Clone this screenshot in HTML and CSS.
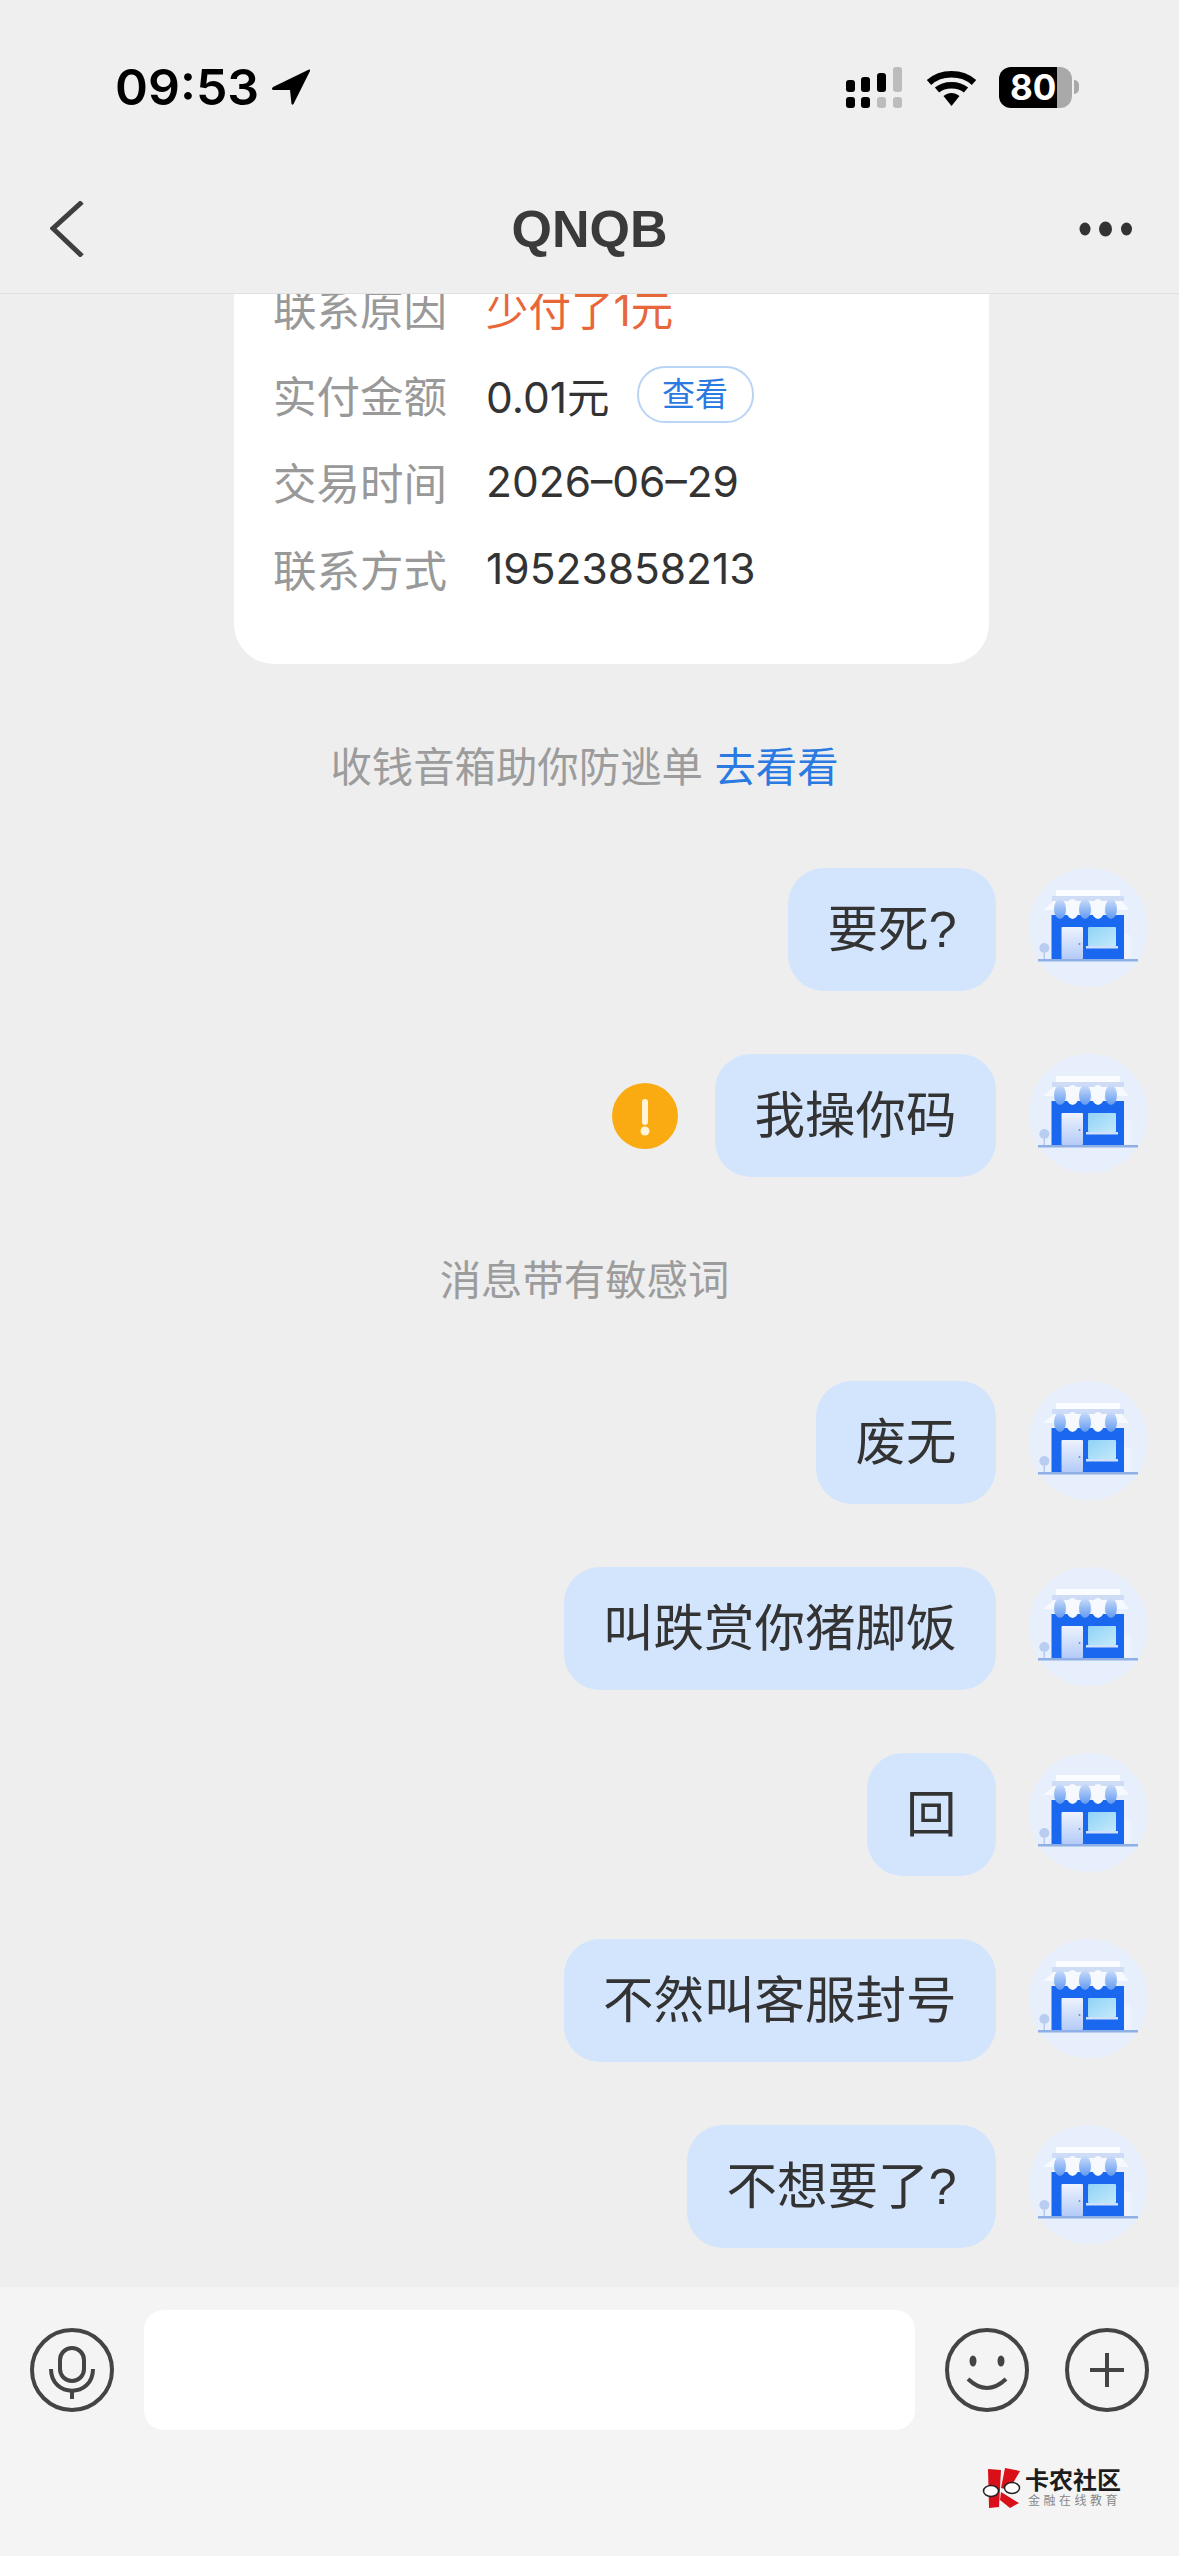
FILE: index.html
```html
<!DOCTYPE html>
<html lang="zh-CN">
<head>
<meta charset="utf-8">
<title>QNQB</title>
<link rel="stylesheet" href="styles.css">
</head>
<body>
<svg class="defs" width="0" height="0" aria-hidden="true">
  <defs>
    <linearGradient id="doorFill" x1="0" y1="0" x2="0" y2="1">
      <stop offset="0" stop-color="#eef3fd"/>
      <stop offset="1" stop-color="#b4cbf8"/>
    </linearGradient>
    <linearGradient id="glassFill" x1="0" y1="0" x2="1" y2="1">
      <stop offset="0" stop-color="#8fd3f6"/>
      <stop offset="1" stop-color="#c4e9fb"/>
    </linearGradient>
    <linearGradient id="awningFill" x1="0" y1="0" x2="0" y2="1">
      <stop offset="0" stop-color="#cadcf9"/>
      <stop offset="1" stop-color="#629af1"/>
    </linearGradient>
    <symbol id="shop" viewBox="0 0 119 119">
      <circle cx="59.500" cy="59.500" r="59.500" fill="#e7effc"/>
      <rect x="84" y="66" width="18" height="25" rx="4" fill="#eef3fc"/>
      <rect x="27" y="22" width="64" height="6" fill="#fafcff"/>
      <rect x="23" y="28" width="72" height="5" fill="#cfdcf5"/>
      <path d="M14 42 L25 33 H93 L100 42 Z" fill="#f6f9fe"/>
      <rect x="22.500" y="47" width="72.500" height="44" fill="#1a68ef"/>
      <ellipse cx="31" cy="41" rx="6" ry="10" fill="url(#awningFill)"/>
      <ellipse cx="43.500" cy="41" rx="6.500" ry="10" fill="#f6f9fe"/>
      <ellipse cx="56" cy="41" rx="6" ry="10" fill="url(#awningFill)"/>
      <ellipse cx="69" cy="41" rx="6.500" ry="10" fill="#f6f9fe"/>
      <ellipse cx="82" cy="41" rx="6" ry="10" fill="url(#awningFill)"/>
      <rect x="32.500" y="59" width="21.500" height="32" rx="1" fill="url(#doorFill)"/>
      <rect x="59" y="59" width="28" height="19" rx="1" fill="url(#glassFill)"/>
      <rect x="57" y="78" width="32" height="2.500" fill="#cfe0fb"/>
      <circle cx="50.500" cy="76" r="1" fill="#6f8fc8"/>
      <rect x="14.500" y="85" width="1.500" height="7" fill="#b5c9ef"/>
      <circle cx="15.300" cy="80" r="5" fill="#b9cdf0"/>
      <rect x="9" y="91" width="100" height="2.500" fill="#8fb0e6"/>
    </symbol>
  </defs>
</svg>

<div class="screen">
  <header class="top">
    <div class="status">
      <div class="status-left">
        <span class="clock">09:53</span>
        <svg class="locator" viewBox="0 0 40 38"><path d="M38 1.500 L2 19 Q0 21 2 22 L19 22 L20.500 36 Q22 38 23 35 L39 3 Q39.500 1 38 1.500 Z"/></svg>
      </div>
      <div class="status-right">
        <svg class="signal" width="58" height="41" viewBox="0 0 58 41">
          <rect class="on" x="0" y="13" width="9" height="12" rx="3"/>
          <rect class="on" x="15" y="10" width="9" height="15" rx="3"/>
          <rect class="on" x="31" y="6" width="9" height="19" rx="3"/>
          <rect class="off" x="47" y="0" width="9" height="25" rx="3"/>
          <rect class="on" x="0" y="30" width="9" height="11" rx="3"/>
          <rect class="on" x="15" y="30" width="9" height="11" rx="3"/>
          <rect class="off" x="31" y="30" width="9" height="11" rx="3"/>
          <rect class="off" x="47" y="30" width="9" height="11" rx="3"/>
        </svg>
        <svg class="wifi" width="51" height="37" viewBox="0 0 51 37">
          <path d="M3 13.500 C15 2.500 36 2.500 48 13.500" fill="none" stroke="#000" stroke-width="6.500"/>
          <path d="M11 21 C18.500 14.500 32.500 14.500 40 21" fill="none" stroke="#000" stroke-width="6.500"/>
          <path d="M17.500 27 C22.500 23 28.500 23 33.500 27 L25.500 37 Z" fill="#000"/>
        </svg>
        <div class="battery">
          <div class="battery-body"><span class="battery-level">80</span></div>
          <span class="battery-nub"></span>
        </div>
      </div>
    </div>
    <nav class="navbar">
      <svg class="back" width="34" height="56" viewBox="0 0 34 56"><path d="M32 1 L3 27.500 L32 55"/></svg>
      <h1 class="title">QNQB</h1>
      <svg class="more" width="54" height="20" viewBox="0 0 54 20">
        <ellipse cx="6" cy="10" rx="5.500" ry="6.500"/>
        <ellipse cx="26.500" cy="10" rx="6.500" ry="7.500"/>
        <ellipse cx="47.500" cy="10" rx="5.500" ry="6.500"/>
      </svg>
    </nav>
  </header>

  <main class="chat">
    <section class="order-card">
      <div class="order-row"><span class="order-label">联系原因</span><span class="order-value reason">少付了1元</span></div>
      <div class="order-row"><span class="order-label">实付金额</span><span class="order-value">0.01元</span><span class="pill">查看</span></div>
      <div class="order-row"><span class="order-label">交易时间</span><span class="order-value">2026–06–29</span></div>
      <div class="order-row"><span class="order-label">联系方式</span><span class="order-value">19523858213</span></div>
    </section>

    <p class="notice">收钱音箱助你防逃单 <a class="notice-link">去看看</a></p>

    <div class="msg">
      <div class="bubble">要死?</div>
      <svg class="avatar"><use href="#shop"/></svg>
    </div>
    <div class="msg">
      <svg class="warn" viewBox="0 0 66 66">
        <circle cx="33" cy="33" r="33" fill="#fbab12"/>
        <rect x="30" y="16" width="6" height="26" rx="3" fill="#fff3d8"/>
        <circle cx="33" cy="48" r="4.500" fill="#fff3d8"/>
      </svg>
      <div class="bubble">我操你码</div>
      <svg class="avatar"><use href="#shop"/></svg>
    </div>

    <p class="notice">消息带有敏感词</p>

    <div class="msg">
      <div class="bubble">废无</div>
      <svg class="avatar"><use href="#shop"/></svg>
    </div>
    <div class="msg">
      <div class="bubble">叫跌赏你猪脚饭</div>
      <svg class="avatar"><use href="#shop"/></svg>
    </div>
    <div class="msg">
      <div class="bubble">回</div>
      <svg class="avatar"><use href="#shop"/></svg>
    </div>
    <div class="msg">
      <div class="bubble">不然叫客服封号</div>
      <svg class="avatar"><use href="#shop"/></svg>
    </div>
    <div class="msg">
      <div class="bubble">不想要了?</div>
      <svg class="avatar"><use href="#shop"/></svg>
    </div>
  </main>

  <footer class="composer">
    <div class="composer-row">
      <svg class="tool" viewBox="0 0 84 84">
        <circle cx="42" cy="42" r="40"/>
        <rect x="30" y="20" width="24" height="33" rx="12"/>
        <path d="M21 41 C21 70 63 70 63 41"/>
        <path d="M42 63 V71"/>
      </svg>
      <div class="field"></div>
      <svg class="tool" viewBox="0 0 84 84">
        <circle cx="42" cy="42" r="40"/>
        <ellipse class="solid" cx="28" cy="33" rx="3.500" ry="5.500"/>
        <ellipse class="solid" cx="56" cy="33" rx="3.500" ry="5.500"/>
        <path d="M23 51 Q42 69 61 51"/>
      </svg>
      <svg class="tool tool-plus" viewBox="0 0 84 84">
        <circle cx="42" cy="42" r="40"/>
        <path d="M25 42 H59 M42 25 V59"/>
      </svg>
    </div>
    <div class="badge">
      <svg class="badge-mark" width="39" height="41" viewBox="0 0 39 41">
        <path d="M6 1 L19 2 L17 39 L7 40 Z" fill="#d9101a"/>
        <path d="M23 0 L38 3 L27 22 L19 20 Z" fill="#d9101a"/>
        <path d="M19 24 L37 35 L28 40 L18 32 Z" fill="#d9101a"/>
        <ellipse cx="9" cy="23" rx="7.500" ry="5.500" fill="#fff" stroke="#222" stroke-width="1.500"/>
        <ellipse cx="30" cy="20" rx="7.500" ry="5.500" fill="#fff" stroke="#222" stroke-width="1.500"/>
      </svg>
      <div class="badge-text">
        <span class="badge-name">卡农社区</span>
        <span class="badge-sub">金融在线教育</span>
      </div>
    </div>
  </footer>
</div>
</body>
</html>
```
FILE: styles.css
```css
* {
  box-sizing: border-box;
}

html,
body {
  margin: 0;
  padding: 0;
}

body {
  font-family: "Liberation Sans", "Noto Sans CJK SC", sans-serif;
  color: #333;
  background: #eee;
}

.defs {
  position: absolute;
}

.screen {
  width: 1179px;
  height: 2556px;
  display: flex;
  flex-direction: column;
  overflow: hidden;
}

/* Header: system status and navigation */
.top {
  flex: none;
  height: 294px;
  background: #efefef;
  border-bottom: 1px solid #e0e0e0;
}

.status {
  height: 164px;
  padding: 10px 100px 0 115px;
  display: flex;
  align-items: center;
  justify-content: space-between;
}

.status-left {
  display: flex;
  align-items: center;
  gap: 12px;
}

.clock {
  font-family: Inter, sans-serif;
  font-size: 50px;
  font-weight: 600;
  line-height: 60px;
  color: #000;
}

.locator {
  width: 40px;
  height: 38px;
  fill: #000;
}

.status-right {
  display: flex;
  align-items: center;
  gap: 22px;
}

.signal .on {
  fill: #000;
}

.signal .off {
  fill: #bcbcbc;
}

.battery {
  display: flex;
  align-items: center;
  gap: 2px;
}

.battery-body {
  width: 73px;
  height: 41px;
  border-radius: 12px;
  background: linear-gradient(to right, #000 0, #000 58px, #a9a9a9 58px);
  display: flex;
  align-items: center;
  padding-left: 11px;
}

.battery-level {
  font-family: Inter, sans-serif;
  font-size: 35px;
  font-weight: 700;
  line-height: 41px;
  color: #fff;
}

.battery-nub {
  width: 5px;
  height: 14px;
  border-radius: 0 7px 7px 0;
  background: #a9a9a9;
}

.navbar {
  height: 129px;
  padding: 0 46px 0 50px;
  display: flex;
  align-items: center;
  justify-content: space-between;
  position: relative;
}

.back {
  fill: none;
  stroke: #3f3f3f;
  stroke-width: 5;
}

.title {
  margin: 0;
  font-size: 52px;
  font-weight: 700;
  line-height: 60px;
  color: #3a3a3a;
  position: absolute;
  left: 0;
  right: 0;
  text-align: center;
}

.more {
  fill: #333;
}

/* Conversation, pinned to the bottom of the scroll area */
.chat {
  flex: 1;
  min-height: 0;
  overflow: hidden;
  display: flex;
  flex-direction: column;
  justify-content: flex-end;
  padding-bottom: 39px;
  background: #eee;
}

.chat > * {
  flex: none;
}

.order-card {
  width: 755px;
  margin-left: 234px;
  padding: 40px 40px 52px 39px;
  background: #fff;
  border-radius: 40px;
}

.order-row {
  height: 87px;
  display: flex;
  align-items: center;
  font-size: 43.500px;
}

.order-label {
  width: 213px;
  color: #999;
}

.order-value {
  font-family: Inter, "Noto Sans CJK SC", sans-serif;
  font-size: 42.500px;
  color: #333;
}

.reason {
  color: #e8673a;
}

.pill {
  width: 117px;
  height: 57px;
  margin-left: 27px;
  border: 2px solid #b9d4f4;
  border-radius: 28px;
  color: #2a7ae2;
  font-size: 33px;
  line-height: 53px;
  text-align: center;
}

.notice {
  margin: 79px 0 75px;
  padding-right: 10px;
  font-size: 41.400px;
  line-height: 50px;
  text-align: center;
  color: #9c9c9c;
}

.notice-link {
  color: #2a7ae2;
}

.msg {
  display: flex;
  justify-content: flex-end;
  align-items: flex-start;
  gap: 33px;
  padding-right: 31px;
}

.msg + .msg {
  margin-top: 63px;
}

.bubble {
  height: 123px;
  padding: 0 39.500px;
  border-radius: 36px;
  background: #d3e4fd;
  font-size: 50.500px;
  line-height: 123px;
  color: #333;
  white-space: nowrap;
}

.avatar {
  flex: none;
  width: 119px;
  height: 119px;
}

.warn {
  width: 66px;
  height: 66px;
  align-self: center;
  margin-right: 4px;
}

/* Message composer */
.composer {
  flex: none;
  height: 269px;
  padding: 23px 30px 0;
  background: #f4f4f4;
  position: relative;
}

.composer-row {
  display: flex;
  align-items: center;
  gap: 30px;
}

.tool {
  flex: none;
  width: 84px;
  height: 84px;
  fill: none;
  stroke: #444;
  stroke-width: 4;
}

.tool .solid {
  fill: #444;
  stroke: none;
}

.tool-plus {
  margin-left: 6px;
}

.field {
  flex: 1;
  height: 120px;
  background: #fff;
  border-radius: 20px;
}

.badge {
  position: absolute;
  left: 982px;
  top: 181px;
  display: flex;
  align-items: center;
  gap: 4px;
}

.badge-text {
  display: flex;
  flex-direction: column;
}

.badge-name {
  font-size: 24px;
  font-weight: 700;
  line-height: 25px;
  color: #1d1d1d;
}

.badge-sub {
  font-size: 12px;
  line-height: 16px;
  letter-spacing: 3.500px;
  padding-left: 3px;
  color: #888;
  white-space: nowrap;
}
```
